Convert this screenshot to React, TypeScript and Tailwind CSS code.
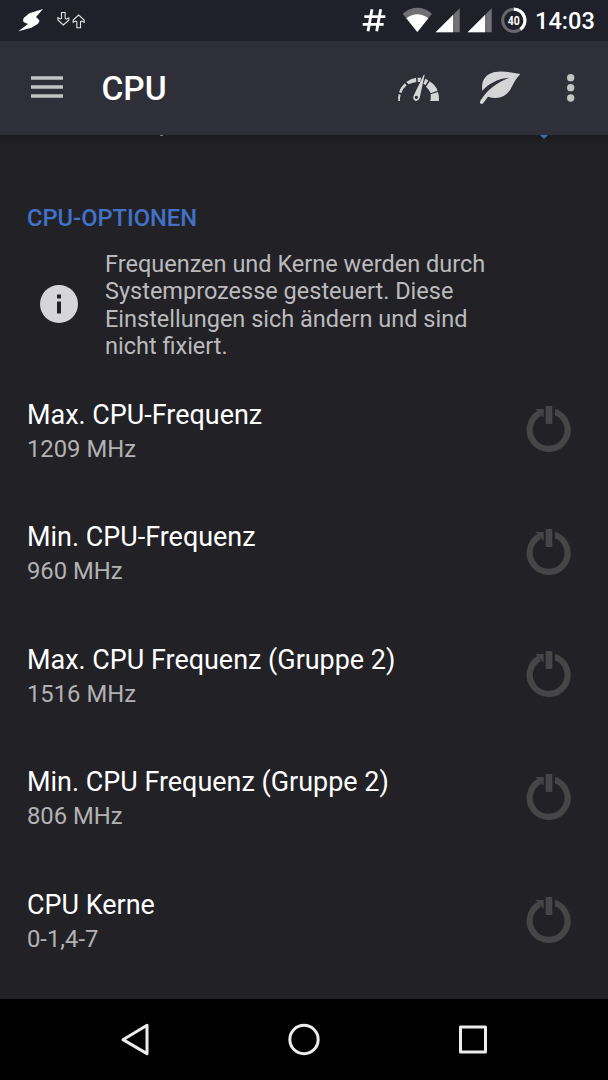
import type { ReactNode } from 'react';

const options = [
  { title: 'Max. CPU-Frequenz', value: '1209 MHz' },
  { title: 'Min. CPU-Frequenz', value: '960 MHz' },
  { title: 'Max. CPU Frequenz (Gruppe 2)', value: '1516 MHz' },
  { title: 'Min. CPU Frequenz (Gruppe 2)', value: '806 MHz' },
  { title: 'CPU Kerne', value: '0-1,4-7' },
];

function StatusBar() {
  return (
    <div className="flex h-[41px] shrink-0 items-start bg-[#20202a] pr-[14px] text-white">
      {/* Notifications */}
      <svg className="h-[41px] w-[100px]" viewBox="0 0 300 123">
        <path d="M55 94L84 72L72 67Q67 63 71 54L88 40L129 27L108 51L118 61Q119 68 113 72L94 83Z" fill="#fff" />
        <g fill="none" stroke="#e4e4e8" strokeWidth="3.2">
          <path d="M184.500 37.500h11v18l4 2 7-4v7L190 75L173.500 60v-7l7 4 4-2Z" />
          <path d="M230.500 83.500h11V65l4-2 7 4v-7L236 45L219.500 60v7l7-4 4 2Z" />
        </g>
      </svg>
      <div className="flex-1" />
      {/* Root, wifi and both SIM signals */}
      <svg className="h-[41px] w-[145px]" viewBox="0 0 435 123">
        <path d="M66 28L54 94M92 28L80 94M43 50h63M38 73h63" fill="none" stroke="#fff" strokeWidth="8.500" />
        <path d="M158 41Q202 6 246 41L202 96Z" fill="#707075" />
        <path d="M169 55Q202 30 235 55L202 96Z" fill="#fff" />
        <path d="M257 97L329 25V97Z" fill="#707075" />
        <path d="M257 97L309 45V97Z" fill="#fff" />
        <path d="M353 97L425 25V97Z" fill="#707075" />
        <path d="M353 97L405 45V97Z" fill="#fff" />
      </svg>
      {/* Battery */}
      <svg className="h-[41px] w-[40px]" viewBox="435 0 120 123">
        <circle cx="491.500" cy="61" r="33.500" fill="none" stroke="#68686d" strokeWidth="9" />
        <path d="M491.500 27.500A33.500 33.500 0 0 1 511 88" fill="none" stroke="#fff" strokeWidth="10" />
        <text x="491" y="76" textAnchor="middle" fill="#fff" fontSize="38" fontWeight="700" fontFamily="Roboto, sans-serif" textLength="36" lengthAdjust="spacingAndGlyphs">
          40
        </text>
      </svg>
      <span className="w-[59px] whitespace-nowrap text-[23.6px] font-medium leading-[42px]">14:03</span>
    </div>
  );
}

function Toolbar() {
  return (
    <header className="flex h-[94px] shrink-0 items-center bg-[#2f2f39] text-[#d5d5d7]">
      <svg className="ml-[31px] h-[94px] w-8" viewBox="0 41 32 94" fill="#c3c3c4">
        <path d="M0 76.300h32v3.500H0zM0 85.300h32v3.500H0zM0 94.300h32v3.500H0z" />
      </svg>
      <h1 className="ml-[38.500px] flex-1 pt-[2px] text-[33.500px] font-medium leading-10 text-white">CPU</h1>
      <IconButton>
        {/* Performance gauge */}
        <svg className="h-[94px] w-[228px]" viewBox="0 -42 684 282" fill="currentColor">
          <path d="M55 138Q53 127 56 117L62 119Q59 128 60 138Z" />
          <path d="M57 112Q61 98 74 85L80 91Q68 101 64 114Z" />
          <path d="M79 81Q92 70 108 68L109 81Q97 83 85 88Z" />
          <path d="M113 68L124 68L120 81L113 80Z" />
          <path d="M136 71L145 76L137 90L130 86Z" />
          <path d="M149 79Q166 90 173 107L152 115Q148 104 138 95Z" />
          <path d="M152 118L174 111Q178 123 177 138H151Q153 128 152 118Z" />
          <path fillRule="evenodd" d="M134 59L119 129Q115 139 107 138Q98 135 100 124L131 60ZM109 122a5 5 0 1 0 0 10a5 5 0 1 0 0-10Z" />
          {/* Power saving leaf */}
          <path d="M307 107C303 81 313 58 344 51C369 46 394 53 421 57C408 69 402 84 394 98C380 126 354 135 324 125L310 144Q306 149 301 145Q298 141 302 136C321 105 348 84 388 68C354 70 326 86 307 107Z" />
          <g fill="#c3c3c4">
            <circle cx="572" cy="68" r="11" />
            <circle cx="572" cy="98" r="11" />
            <circle cx="572" cy="129" r="11" />
          </g>
        </svg>
      </IconButton>
    </header>
  );
}

function IconButton({ children }: { children: ReactNode }) {
  return <div className="flex shrink-0">{children}</div>;
}

function PowerIcon() {
  return (
    <svg className="mr-[18px] mt-5 size-20 shrink-0" viewBox="0 0 240 240" fill="#464646">
      <path d="M139 67.500A57 57 0 1 1 88 70" fill="none" stroke="#464646" strokeWidth="18.500" />
      <path d="M135 57L146 60L141 76L135 77ZM76 57H101V83Z" />
      <rect x="107" y="48" width="20" height="54" rx="4" />
    </svg>
  );
}

function OptionRow({ title, value }: { title: string; value: string }) {
  return (
    <div className="flex h-[122.670px] items-start pl-[27px]">
      <div className="flex-1 pt-[27.500px] leading-[34px]">
        <div className="text-[26.950px] text-white">{title}</div>
        <div className="text-[23.800px] text-[#b2b2b4]">{value}</div>
      </div>
      <PowerIcon />
    </div>
  );
}

function NavBar() {
  return (
    <nav className="flex h-[81px] shrink-0 items-start bg-black">
      <svg className="ml-[100px] mt-[11px] h-[60px] w-[400px]" viewBox="0 0 1200 180" fill="none" stroke="#ececec" strokeWidth="9" strokeLinejoin="round">
        <path d="M69 89L141 46V131Z" />
        <circle cx="612" cy="88.500" r="42.500" />
        <rect x="1081.500" y="51" width="75" height="75" />
      </svg>
    </nav>
  );
}

export default function App() {
  return (
    <div className="flex h-[1080px] w-[608px] flex-col overflow-hidden bg-[#222126] font-['Roboto',sans-serif]">
      <StatusBar />
      <Toolbar />
      <main className="flex-1 overflow-hidden">
        {/* Rest of the scrolled-off card below the toolbar */}
        <div className="flex h-[11px] items-start bg-linear-to-b from-[#1c1b1f] to-[#212025]">
          <div className="ml-[160px] h-px w-[3px] bg-[#77777a]" />
          <svg className="ml-[377px] h-1 w-2" viewBox="0 0 8 4">
            <path d="M0 0H8L4 4Z" fill="#4168b0" />
          </svg>
        </div>
        <h2 className="ml-[27px] mt-[56px] text-[23.700px] font-medium leading-8 text-[#4272c8]">CPU-OPTIONEN</h2>
        <div className="mt-4 flex h-[120px]">
          <svg className="ml-[39px] mt-[34px] size-10 shrink-0" viewBox="0 0 40 40">
            <circle cx="20" cy="20" r="19" fill="#d6d6d8" />
            <path d="M18 10.500h4v4h-4zM18 17.500h4v12h-4z" fill="#222126" />
          </svg>
          <p className="ml-[26px] w-[400px] pt-[0.500px] text-[23.500px] leading-[27.600px] text-[#bbbbbd]">
            Frequenzen und Kerne werden durch
            <br />
            Systemprozesse gesteuert. Diese
            <br />
            Einstellungen sich ändern und sind
            <br />
            nicht fixiert.
          </p>
        </div>
        {options.map((option) => (
          <OptionRow key={option.title} title={option.title} value={option.value} />
        ))}
      </main>
      <NavBar />
    </div>
  );
}
